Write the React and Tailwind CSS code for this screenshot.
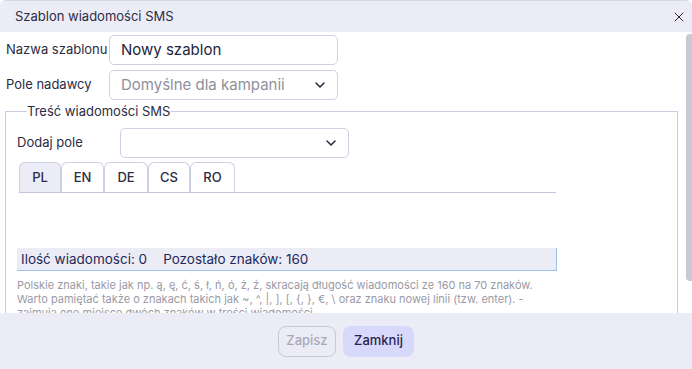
import { X, ChevronDown } from 'lucide-react';

const tabs = [
    { label: 'PL', w: 'w-[42px]' },
    { label: 'EN', w: 'w-[43px]' },
    { label: 'DE', w: 'w-[44px]' },
    { label: 'CS', w: 'w-[42px]' },
    { label: 'RO', w: 'w-[45px]' },
];

function Select({ value, className }) {
    return (
        <div className={`flex h-[30px] items-center justify-between rounded-[5px] border border-[#cfcfe3] bg-white pl-[11px] pr-[9px] ${className}`}>
            <span className="text-[15px] text-[#8f8f9c]">{value}</span>
            <ChevronDown size={16} strokeWidth={2.2} className="text-[#24243a]" />
        </div>
    );
}

export default function App() {
    return (
        <div className="flex h-[369px] w-[692px] flex-col overflow-hidden rounded-t-[6px] border-t border-[#d6d6e6] bg-white font-['Inter',sans-serif] text-[#2c2c44]">
            {/* header */}
            <div className="flex h-[31px] shrink-0 items-center justify-between bg-[#ececf7] pl-[15px] pr-[5px]">
                <span className="text-[13px]">Szablon wiadomości SMS</span>
                <X size={16} strokeWidth={1.5} className="text-[#2a2240]" />
            </div>

            {/* body + scrollbar */}
            <div className="flex min-h-0 flex-1">
                <div className="min-w-0 flex-1 overflow-hidden">
                    <div className="pb-[14px] pl-[5px] pr-[8px] pt-[3px]">
                        <div className="flex items-center pl-[1px]">
                            <label className="w-[103px] text-[13px]">Nazwa szablonu</label>
                            <div className="flex h-[30px] w-[229px] items-center rounded-[5px] border border-[#cfcfe3] px-[11px] text-[15px] text-[#24243a]">
                                Nowy szablon
                            </div>
                        </div>
                        <div className="mt-[5px] flex items-center pl-[1px]">
                            <label className="w-[103px] text-[13px]">Pole nadawcy</label>
                            <Select value="Domyślne dla kampanii" className="w-[229px]" />
                        </div>

                        <fieldset className="mt-[3px] border border-[#cdcde2] pb-[16px] pl-[11px] pr-[10px]">
                            <legend className="ml-[10px] text-[13px] leading-[16px]">Treść wiadomości SMS</legend>
                            <div className="mt-[9px] flex items-center">
                                <label className="w-[103px] text-[13px]">Dodaj pole</label>
                                <Select value="" className="w-[229px]" />
                            </div>

                            <div className="mt-[4px] w-[539px] pl-[2px]">
                                <div className="flex border-b border-[#c3c3e2]">
                                    {tabs.map((t, i) => (
                                        <div
                                            key={t.label}
                                            className={`flex h-[30px] items-center justify-center rounded-t-[6px] border border-b-0 border-[#cfcfe3] text-[13px] font-medium ${t.w} ${i === 0 ? 'bg-[#ececf7]' : 'bg-white'}`}
                                        >
                                            {t.label}
                                        </div>
                                    ))}
                                </div>
                                <div className="h-[55px]" />
                            </div>

                            <div className="flex h-[23px] w-[540px] items-center gap-[16px] border-b border-r border-[#9fc0ee] bg-[#ececf7] pl-[4px] text-[13.5px] text-[#1e2a5a]">
                                <span>Ilość wiadomości: 0</span>
                                <span>Pozostało znaków: 160</span>
                            </div>
                            <p className="mt-[7px] text-[11px] leading-[14px] text-[#9a9aa6]">
                                Polskie znaki, takie jak np. ą, ę, ć, ś, ł, ń, ó, ż, ź, skracają długość wiadomości ze 160 na 70 znaków.
                                <br />
                                Warto pamiętać także o znakach takich jak ~, ^, |, ], [, {'{'}, {'}'}, €, \ oraz znaku nowej linii (tzw. enter). -
                                <br />
                                zajmują one miejsce dwóch znaków w treści wiadomości.
                            </p>
                        </fieldset>
                    </div>
                </div>
                {/* scrollbar */}
                <div className="w-[6px] shrink-0 bg-white pt-[2px]">
                    <div className="h-[247px] rounded-l-[4px] bg-[#c9c9d6]" />
                </div>
            </div>

            {/* footer */}
            <div className="flex h-[56px] shrink-0 items-center justify-center gap-[7px] bg-[#ececf7]">
                <button disabled className="h-[31px] w-[58px] rounded-[8px] border border-[#c9c9d3] text-[13px] font-medium text-[#a9a9b6]">
                    Zapisz
                </button>
                <button className="h-[31px] w-[71px] rounded-[8px] bg-[#d7d9fb] text-[13px] font-medium text-[#2a2450]">
                    Zamknij
                </button>
            </div>
        </div>
    );
}
